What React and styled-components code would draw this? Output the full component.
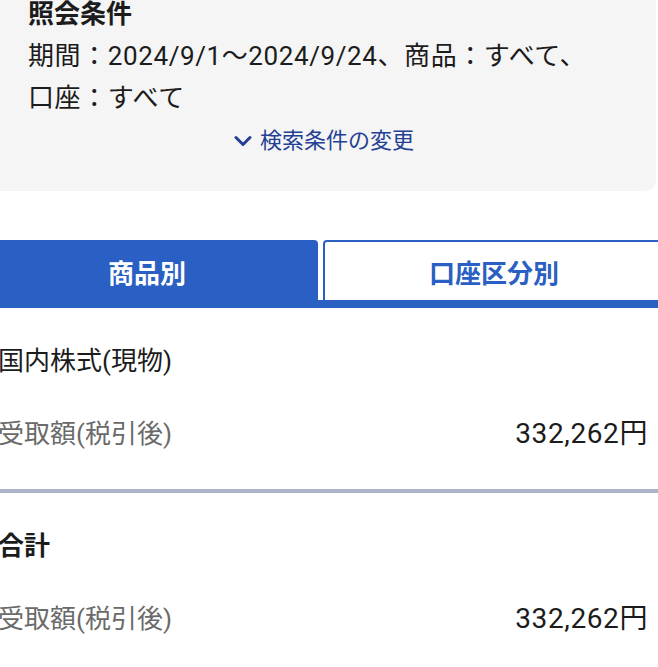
import React from 'react';
import styled, { createGlobalStyle } from 'styled-components';

const GlobalStyle = createGlobalStyle`
  html, body {
    margin: 0;
    padding: 0;
    background: #ffffff;
    overflow: hidden;
  }
  body {
    font-family: "Roboto", "Noto Sans CJK JP", sans-serif;
    color: #1c1c1c;
  }
`;

const Page = styled.div`
  width: 682px;
  margin-left: -24px;
`;

const ConditionPanel = styled.section`
  background: #f5f5f5;
  margin-right: 2px;
  padding: 0 24px 35px 52px;
  border-radius: 0 0 10px 10px;
`;

const PanelTitle = styled.h2`
  margin: 0 0 7px;
  font-size: 26px;
  line-height: 28px;
  font-weight: 700;
`;

const PanelText = styled.p`
  margin: 0;
  font-size: 26px;
  line-height: 42px;
  letter-spacing: 0.6px;
`;

const ChangeLink = styled.a`
  display: flex;
  justify-content: center;
  align-items: center;
  gap: 8px;
  margin: 7px 0 0 -12px;
  font-size: 22px;
  line-height: 30px;
  color: #243f94;
  text-decoration: none;
  cursor: pointer;
`;

const TabRow = styled.div`
  display: flex;
  gap: 5px;
  margin-top: 49px;
  border-bottom: 8px solid #2a5fc4;
`;

const Tab = styled.button`
  flex: 0 0 342px;
  height: 60px;
  box-sizing: border-box;
  border: 2px solid #2a5fc4;
  border-bottom: none;
  border-radius: 4px 4px 0 0;
  background: ${(p) => (p.$active ? '#2a5fc4' : '#ffffff')};
  color: ${(p) => (p.$active ? '#ffffff' : '#2a5fc4')};
  font-family: inherit;
  font-size: 26px;
  font-weight: 700;
  padding: 0;
  cursor: pointer;
`;

const Section = styled.div`
  display: flex;
  flex-direction: column;
  gap: 37px;
  padding: 35px 10px 37px 22px;
  border-bottom: ${(p) => (p.$divided ? '4px solid #adb4c6' : 'none')};
`;

const SectionTitle = styled.div`
  font-size: 26px;
  line-height: 36px;
  font-weight: ${(p) => (p.$bold ? 700 : 400)};
`;

const Row = styled.div`
  display: flex;
  justify-content: space-between;
  align-items: center;
  font-size: 26px;
  line-height: 36px;
`;

const Label = styled.span`
  color: #6a6a6a;
`;

const Value = styled.span`
  color: #1c1c1c;
  font-size: 28px;
  letter-spacing: 0.6px;
`;

const Chevron = () => (
  <svg width="18" height="12" viewBox="0 0 18 12" fill="none">
    <path d="M2 2.5 L9 9.5 L16 2.5" stroke="#243f94" strokeWidth="3" strokeLinecap="round" strokeLinejoin="round" />
  </svg>
);

const App = () => {
  return (
    <Page>
      <GlobalStyle />
      <ConditionPanel>
        <PanelTitle>照会条件</PanelTitle>
        <PanelText>
          期間：2024/9/1〜2024/9/24、商品：すべて、
          <br />
          口座：すべて
        </PanelText>
        <ChangeLink>
          <Chevron />
          検索条件の変更
        </ChangeLink>
      </ConditionPanel>

      <TabRow>
        <Tab $active>商品別</Tab>
        <Tab>口座区分別</Tab>
      </TabRow>

      <Section $divided>
        <SectionTitle>国内株式(現物)</SectionTitle>
        <Row>
          <Label>受取額(税引後)</Label>
          <Value>332,262円</Value>
        </Row>
      </Section>

      <Section>
        <SectionTitle $bold>合計</SectionTitle>
        <Row>
          <Label>受取額(税引後)</Label>
          <Value>332,262円</Value>
        </Row>
      </Section>
    </Page>
  );
};

export default App;
